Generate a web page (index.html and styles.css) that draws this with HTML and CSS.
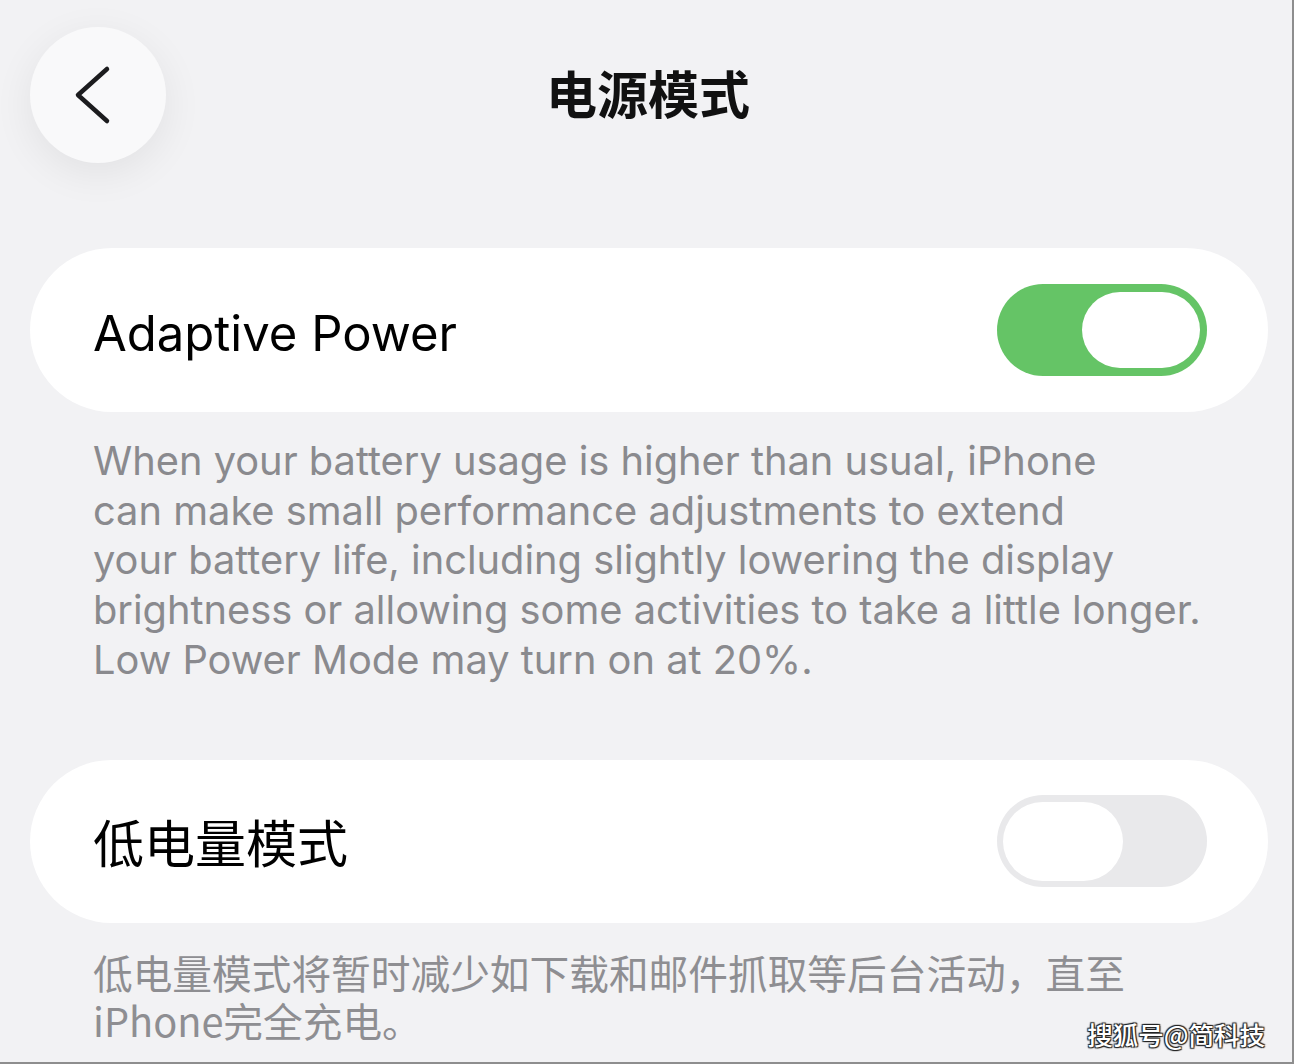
FILE: index.html
```html
<!DOCTYPE html>
<html>
<head>
  <title>电源模式</title>
  <link rel="stylesheet" href="styles.css">
</head>
<body>
  <div class="page">
    <div class="header">
      <button class="back-btn" type="button">
        <svg width="136" height="136" viewBox="0 0 136 136">
          <polyline points="77,42 48,68 77,94" fill="none" stroke="#1c1c1e" stroke-width="4.5" stroke-linecap="round" stroke-linejoin="round"/>
        </svg>
      </button>
      <h1 class="title">电源模式</h1>
      <div></div>
    </div>

    <div class="card">
      <span class="card-label latin">Adaptive Power</span>
      <div class="switch on"><span class="knob"></span></div>
    </div>
    <p class="note latin">
      When your battery usage is higher than usual, iPhone<br>
      can make small performance adjustments to extend<br>
      your battery life, including slightly lowering the display<br>
      brightness or allowing some activities to take a little longer.<br>
      Low Power Mode may turn on at 20%.
    </p>

    <div class="card second">
      <span class="card-label cjk">低电量模式</span>
      <div class="switch off"><span class="knob"></span></div>
    </div>
    <p class="note cjk-note">
      低电量模式将暂时减少如下载和邮件抓取等后台活动，直至<br>
      iPhone完全充电。
    </p>

    <div class="watermark">搜狐号@简科技</div>
  </div>
</body>
</html>
```

FILE: styles.css
```css
body {
  margin: 0;
  padding: 0;
  background-color: #f2f2f4;
  font-family: Inter, "Noto Sans CJK SC", sans-serif;
}

.page {
  position: relative;
  width: 1294px;
  height: 1064px;
  box-sizing: border-box;
  border-right: 2px solid #8e8e8e;
  border-bottom: 2px solid #8e8e8e;
  overflow: hidden;
}

.header {
  display: grid;
  grid-template-columns: 1fr auto 1fr;
  align-items: center;
  height: 248px;
  box-sizing: border-box;
  padding: 27px 0 85px 30px;
}

.back-btn {
  width: 136px;
  height: 136px;
  padding: 0;
  border: none;
  border-radius: 50%;
  background-color: #f9f9fa;
  box-shadow: 0 10px 40px rgba(0, 0, 0, 0.07);
  cursor: pointer;
}

.back-btn svg {
  display: block;
}

.title {
  margin: 0;
  font-family: "Noto Sans CJK SC", sans-serif;
  font-size: 51px;
  font-weight: 700;
  color: #111;
  line-height: 136px;
  transform: translate(-13px, -3px);
}

.card {
  display: flex;
  align-items: center;
  justify-content: space-between;
  height: 164px;
  margin: 0 24px 0 30px;
  padding: 0 61px 0 63px;
  background-color: #fff;
  border-radius: 82px;
}

.card.second {
  height: 163px;
}

.card-label {
  color: #000;
}

.card-label.latin {
  font-family: Inter, sans-serif;
  font-size: 49px;
  font-weight: 400;
  letter-spacing: 0;
  transform: translateY(3px);
}

.card-label.cjk {
  font-family: "Noto Sans CJK SC", sans-serif;
  font-size: 51px;
  font-weight: 400;
}

.switch {
  display: flex;
  align-items: center;
  width: 210px;
  height: 92px;
  box-sizing: border-box;
  border-radius: 46px;
}

.switch.on {
  justify-content: flex-end;
  padding: 0 7px;
  background-color: #65c466;
}

.switch.off {
  justify-content: flex-start;
  padding: 0 6px;
  background-color: #e9e9eb;
}

.switch .knob {
  width: 118px;
  height: 76px;
  border-radius: 38px;
  background-color: #fff;
}

.switch.off .knob {
  width: 120px;
  height: 79px;
  border-radius: 40px;
}

.note {
  margin: 24px 0 75px 93px;
  color: #8a8a8e;
  font-size: 39.8px;
  line-height: 49.7px;
}

.note.cjk-note {
  margin-top: 25px;
  margin-bottom: 0;
  font-family: "Noto Sans CJK SC", sans-serif;
  font-size: 39.7px;
  font-weight: 400;
  color: #8e8e92;
  line-height: 48px;
}

.watermark {
  position: absolute;
  right: 27px;
  bottom: 10px;
  font-family: "Noto Sans CJK SC", sans-serif;
  font-size: 25.5px;
  font-weight: 500;
  color: #fff;
  text-shadow: 1px 1px 1px #222, -1px -1px 1px #222, 1px -1px 1px #222, -1px 1px 1px #222;
}
```
